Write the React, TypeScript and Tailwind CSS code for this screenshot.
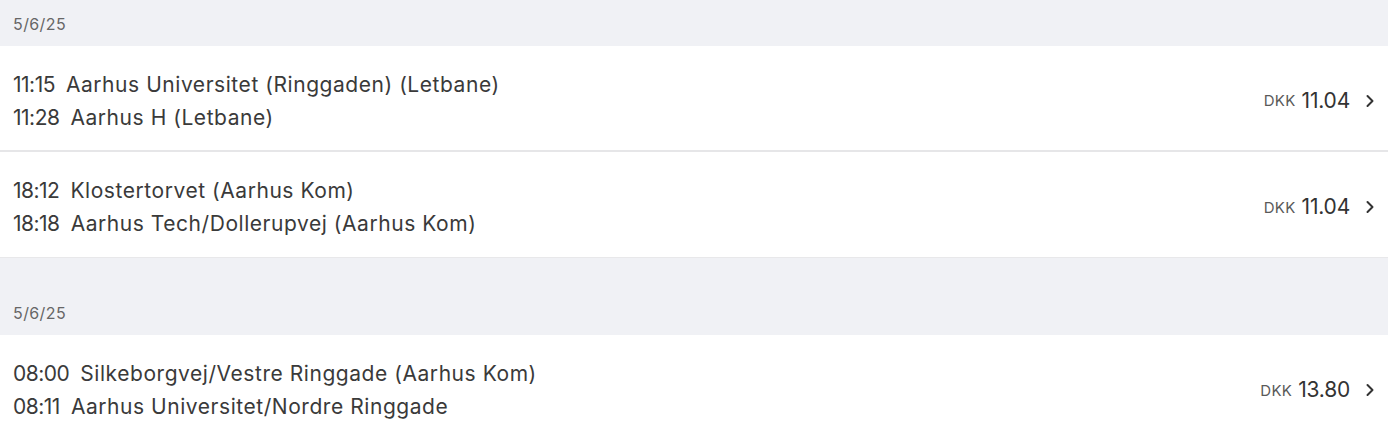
import { ChevronRight } from "lucide-react";

type Trip = {
  dep: string;
  from: string;
  arr: string;
  to: string;
  price: string;
};

const groups: { date: string; trips: Trip[] }[] = [
  {
    date: "5/6/25",
    trips: [
      {
        dep: "11:15",
        from: "Aarhus Universitet (Ringgaden) (Letbane)",
        arr: "11:28",
        to: "Aarhus H (Letbane)",
        price: "11.04",
      },
      {
        dep: "18:12",
        from: "Klostertorvet (Aarhus Kom)",
        arr: "18:18",
        to: "Aarhus Tech/Dollerupvej (Aarhus Kom)",
        price: "11.04",
      },
    ],
  },
  {
    date: "5/6/25",
    trips: [
      {
        dep: "08:00",
        from: "Silkeborgvej/Vestre Ringgade (Aarhus Kom)",
        arr: "08:11",
        to: "Aarhus Universitet/Nordre Ringgade",
        price: "13.80",
      },
    ],
  },
];

function TripRow({ trip, last }: { trip: Trip; last: boolean }) {
  return (
    <div
      className={`flex h-[106px] items-center bg-white pl-[13px] pr-[8px] pt-[5px] ${
        last ? "border-b border-[#e8e8ea]" : "border-b-2 border-[#e6e6e8]"
      }`}
    >
      <div className="flex-1 text-[21px] leading-[33px] tracking-[0.55px] text-[#3a3a3a]">
        <div className="flex gap-[11px]">
          <span className="tracking-[-0.5px]">{trip.dep}</span>
          <span>{trip.from}</span>
        </div>
        <div className="flex gap-[11px]">
          <span className="tracking-[-0.5px]">{trip.arr}</span>
          <span>{trip.to}</span>
        </div>
      </div>
      <div className="flex items-center">
        <span className="mr-[6px] mt-[2px] text-[15px] tracking-[0.3px] text-[#5a5a5a]">DKK</span>
        <span className="text-[21px] tracking-[-0.2px] text-[#333]">{trip.price}</span>
        <ChevronRight className="ml-[10px] h-[20px] w-[20px] text-[#333]" strokeWidth={2.4} />
      </div>
    </div>
  );
}

export default function App() {
  return (
    <div
      className="min-h-[432px] w-full bg-[#f0f1f5]"
      style={{ fontFamily: "'Inter', 'Noto Sans', sans-serif" }}
    >
      {groups.map((g, gi) => (
        <section key={gi} className={gi > 0 ? "pt-[31px]" : ""}>
          <div className="flex h-[46px] items-center pl-[13px] pt-[2px] text-[16px] tracking-[0.4px] text-[#666]">
            {g.date}
          </div>
          {g.trips.map((t, ti) => (
            <TripRow key={ti} trip={t} last={ti === g.trips.length - 1} />
          ))}
        </section>
      ))}
    </div>
  );
}
